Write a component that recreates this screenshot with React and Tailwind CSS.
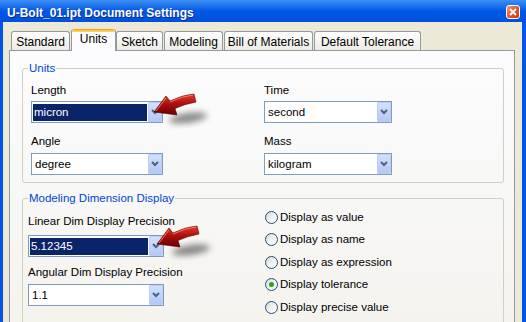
import React from "react";

// Small chevron used inside the combo box buttons
const Chevron = () => (
  <svg width="8" height="6" viewBox="0 0 8 6">
    <path d="M1 1 L4 4 L7 1" fill="none" stroke="#4D6185" strokeWidth="2" />
  </svg>
);

const Combo = ({ value, selected, width }) => {
  return (
    <div className={`flex h-[22px] ${width} border border-[#7F9DB9] bg-white`}>
      <div className="flex flex-1 pl-[1px] pr-[1px] pt-[2px] pb-[1px]">
        {selected ? (
          <div className="flex flex-1 items-center bg-[#0A246A] pl-[1px] text-white">{value}</div>
        ) : (
          <div className="flex flex-1 items-center pl-[2px]">{value}</div>
        )}
      </div>
      <div className="flex w-[14px] items-center justify-center rounded-[1px] border border-[#BBCDF6] bg-linear-to-b from-[#D2E0FD] to-[#B4C8F6]">
        <Chevron />
      </div>
    </div>
  );
};

const Radio = ({ label, checked }) => (
  <div className="flex h-[22.5px] shrink-0 items-center">
    <span className="flex h-[13px] w-[13px] items-center justify-center rounded-full border border-[#1C5180] bg-linear-to-br from-[#D8D5CC] via-[#F3F2EE] to-white">
      {checked && <span className="h-[5px] w-[5px] rounded-full bg-[#24A524]" />}
    </span>
    <span className="ml-[2px]">{label}</span>
  </div>
);

const Tab = ({ label, width, margin, active }) => {
  if (active) {
    return (
      <div className={`flex h-[22px] ${width} ${margin} flex-col rounded-t-[3px] border-x border-[#919B9C] bg-[#FCFCFE]`}>
        <div className="h-[3px] rounded-t-[3px] bg-linear-to-b from-[#E68B2C] via-[#FFC73C] to-[#FFD75C]" />
        <div className="text-center leading-[14px]">{label}</div>
      </div>
    );
  }
  return (
    <div className={`mb-[1px] h-[19px] ${width} ${margin} rounded-t-[3px] border border-b-0 border-[#919B9C] bg-linear-to-b from-white to-[#ECEBE4] pt-[3px] text-center leading-[14px]`}>
      {label}
    </div>
  );
};

// Red 3D pointer arrow with its soft shadow
const Arrow = ({ dx, dy }) => (
  <g transform={`translate(${dx} ${dy})`}>
    <ellipse cx="188" cy="118" rx="19" ry="5" fill="#000" opacity="0.45" filter="url(#blur)" transform="rotate(-8 188 118)" />
    <path
      d="M154,112 L166,96 L170,101 Q182,95 194,94 L196,102 Q185,104 175,108.5 L177,115 Z"
      fill="url(#red)"
      stroke="#5A0000"
      strokeWidth="0.6"
    />
    <path d="M156,111 L166,98 M170,102 Q182,96 193,95" fill="none" stroke="#FF8C7C" strokeWidth="1" opacity="0.8" />
  </g>
);

export default function App() {
  return (
    <div className="relative flex h-[322px] w-[526px] flex-col overflow-hidden bg-[#0055E5] font-['Liberation_Sans',Arial,sans-serif] text-[11.5px] text-black">
      {/* Title bar */}
      <div className="flex h-[22px] shrink-0 items-start justify-between bg-linear-to-b from-[#3C8FF5] via-[#0058E6] to-[#0050DC] pl-[7px] pr-[6px]">
        <div className="mt-[6px] text-[12px] font-bold leading-[14px] text-white [text-shadow:1px_1px_0_#0B2F8F]">
          U-Bolt_01.ipt Document Settings
        </div>
        <div className="mt-[5px] flex h-[14px] w-[14px] items-center justify-center rounded-[3px] border border-white bg-linear-to-br from-[#F09A7A] via-[#E0552D] to-[#C33A10]">
          <svg width="8" height="8" viewBox="0 0 8 8">
            <path d="M1 1 L7 7 M7 1 L1 7" stroke="#fff" strokeWidth="1.8" />
          </svg>
        </div>
      </div>

      {/* Dialog body */}
      <div className="ml-[3px] mr-[4px] flex shrink-0 grow flex-col bg-[#ECE9D8] pl-[6px] pr-[7px] pt-[7px]">
        <div className="relative z-10 -mb-px flex shrink-0 items-end pl-[2px] text-[12px]">
          <Tab label="Standard" width="w-[59px]" margin="ml-0" />
          <Tab label="Units" width="w-[45px]" margin="ml-[1px]" active />
          <Tab label="Sketch" width="w-[47px]" margin="ml-0" />
          <Tab label="Modeling" width="w-[59px]" margin="ml-[1px]" />
          <Tab label="Bill of Materials" width="w-[89px]" margin="ml-[1px]" />
          <Tab label="Default Tolerance" width="w-[107px]" margin="ml-[1px]" />
        </div>

        <div className="shrink-0 grow border border-[#919B9C] bg-linear-to-b from-[#FCFCFE] to-[#F4F3EE] pl-[12px] pr-[10px] pt-[10px]">
          {/* Units group */}
          <fieldset className="rounded-[3px] border border-[#D0D0BF]">
            <legend className="ml-[5px] px-[1px] leading-[14px] text-[#0046D5]">Units</legend>
            <div className="grid grid-cols-[233px_1fr] pb-[7px] pl-[8px] pt-[8px]">
              <div className="flex flex-col">
                <div className="leading-[14px]">Length</div>
                <div className="mt-[4px]">
                  <Combo value="micron" selected width="w-[132px]" />
                </div>
                <div className="mt-[11px] leading-[14px]">Angle</div>
                <div className="mt-[5px]">
                  <Combo value="degree" width="w-[132px]" />
                </div>
              </div>
              <div className="flex flex-col">
                <div className="leading-[14px]">Time</div>
                <div className="mt-[4px]">
                  <Combo value="second" width="w-[128px]" />
                </div>
                <div className="mt-[11px] leading-[14px]">Mass</div>
                <div className="mt-[5px]">
                  <Combo value="kilogram" width="w-[128px]" />
                </div>
              </div>
            </div>
          </fieldset>

          {/* Modeling Dimension Display group */}
          <fieldset className="mt-[8px] rounded-[3px] border border-[#D0D0BF]">
            <legend className="ml-[5px] px-[1px] leading-[14px] text-[#0046D5]">Modeling Dimension Display</legend>
            <div className="grid grid-cols-[237px_1fr] pb-[10px] pl-[5px]">
              <div className="flex flex-col pt-[9px]">
                <div className="leading-[14px]">Linear Dim Display Precision</div>
                <div className="mt-[7px]">
                  <Combo value="5.12345" selected width="w-[136px]" />
                </div>
                <div className="mt-[8px] leading-[14px]">Angular Dim Display Precision</div>
                <div className="mt-[5px]">
                  <Combo value="1.1" width="w-[136px]" />
                </div>
              </div>
              <div className="flex flex-col pt-[1px]">
                <Radio label="Display as value" />
                <Radio label="Display as name" />
                <Radio label="Display as expression" />
                <Radio label="Display tolerance" checked />
                <Radio label="Display precise value" />
              </div>
            </div>
          </fieldset>
        </div>
      </div>

      {/* Callout arrows pointing at the drop-down buttons */}
      <svg className="pointer-events-none absolute left-0 top-0" width="526" height="322">
        <defs>
          <linearGradient id="red" x1="0" y1="0" x2="0" y2="1">
            <stop offset="0" stopColor="#E2402E" />
            <stop offset="0.45" stopColor="#B01010" />
            <stop offset="1" stopColor="#660000" />
          </linearGradient>
          <filter id="blur" x="-50%" y="-50%" width="200%" height="200%">
            <feGaussianBlur stdDeviation="3" />
          </filter>
        </defs>
        <Arrow dx={0} dy={0} />
        <Arrow dx={3} dy={132} />
      </svg>
    </div>
  );
}
